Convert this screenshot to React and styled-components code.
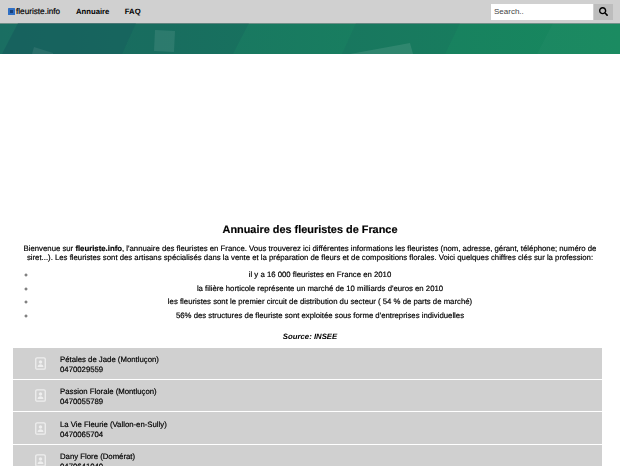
import styled, { createGlobalStyle } from "styled-components";
import { FaSearch } from "react-icons/fa";

const shops = [
    { name: "Pétales de Jade (Montluçon)", phone: "0470029559" },
    { name: "Passion Florale (Montluçon)", phone: "0470055789" },
    { name: "La Vie Fleurie (Vallon-en-Sully)", phone: "0470065704" },
    { name: "Dany Flore (Domérat)", phone: "0470641040" }
];

const facts = [
    "il y a 16 000 fleuristes en France en 2010",
    "la filière horticole représente un marché de 10 milliards d'euros en 2010",
    "les fleuristes sont le premier circuit de distribution du secteur ( 54 % de parts de marché)",
    "56% des structures de fleuriste sont exploitée sous forme d'entreprises individuelles"
];

function App() {
    return (
        <Page>
            <GlobalStyle />
            <TopBar>
                <Brand>
                    <BrandIcon viewBox="0 0 7 7">
                        <rect width="7" height="7" rx="0.6" fill="#2f6fc4" />
                        <rect x="2" y="2" width="3" height="3" fill="#173f7a" />
                    </BrandIcon>
                    fleuriste.info
                </Brand>
                <NavLink>Annuaire</NavLink>
                <NavLink>FAQ</NavLink>
                <SearchBox>
                    <SearchInput placeholder="Search.." />
                    <SearchButton><FaSearch /></SearchButton>
                </SearchBox>
            </TopBar>
            <Banner>
                <BannerArt viewBox="0 0 620 31" preserveAspectRatio="none">
                    <polygon points="18,0 136,0 122,31 2,31" fill="#15505a" opacity="0.4" />
                    <polygon points="136,0 249,0 233,31 122,31" fill="#15505a" opacity="0.18" />
                    <polygon points="356,0 460,0 445,31 342,31" fill="#15505a" opacity="0.12" />
                    <polygon points="553,0 620,0 620,31 537,31" fill="#fff" opacity="0.02" />
                    <polygon points="155,7 175,8 174,29 154,28" fill="#fff" opacity="0.09" />
                    <polygon points="32,31 34,24 53,30 53,31" fill="#fff" opacity="0.08" />
                    <polygon points="350,31 410,20 413,31" fill="#fff" opacity="0.1" />
                </BannerArt>
            </Banner>
            <AdSlot />
            <Title>Annuaire des fleuristes de France</Title>
            <Intro>
                Bienvenue sur <b>fleuriste.info</b>, l'annuaire des fleuristes en France. Vous trouverez ici différentes informations les fleuristes (nom, adresse, gérant, téléphone; numéro de siret...). Les fleuristes sont des artisans spécialisés dans la vente et la préparation de fleurs et de compositions florales. Voici quelques chiffres clés sur la profession:
            </Intro>
            <Facts>
                {facts.map((fact) => <Fact key={fact}>{fact}</Fact>)}
            </Facts>
            <Source>Source: INSEE</Source>
            <ShopList>
                {shops.map((shop) => (
                    <ShopRow key={shop.phone}>
                        <ShopIcon viewBox="0 0 12 14">
                            <rect x="0.8" y="0.8" width="10.4" height="12.4" rx="1.4" fill="none" stroke="#eeeeee" strokeWidth="1.4" />
                            <circle cx="6" cy="5.4" r="1.9" fill="#eeeeee" />
                            <path d="M2.8 10.8c0-2 1.4-2.9 3.2-2.9s3.2.9 3.2 2.9z" fill="#eeeeee" />
                        </ShopIcon>
                        <ShopText>
                            <span>{shop.name}</span>
                            <span>{shop.phone}</span>
                        </ShopText>
                    </ShopRow>
                ))}
            </ShopList>
        </Page>
    );
}

const GlobalStyle = createGlobalStyle`
    html, body {
        margin: 0;
        height: 466px;
        overflow: hidden;
        background: #fff;
        color: #000;
        font-family: "Liberation Sans", Arial, sans-serif;
        font-size: 7.78px;
        text-rendering: geometricPrecision;
    }
`;

const Page = styled.div`
    filter: blur(0.35px);
    -webkit-text-stroke: 0.18px #000;
`;

const TopBar = styled.header`
    display: flex;
    align-items: center;
    height: 23px;
    padding: 0 7px 0 8px;
    background: #d0d0d0;
    box-sizing: border-box;
`;

const Brand = styled.a`
    display: flex;
    align-items: center;
    gap: 1px;
    width: 68px;
    font-size: 8.2px;
`;

const BrandIcon = styled.svg`
    width: 7px;
    height: 7px;
`;

const NavLink = styled.a`
    margin-right: 15.5px;
    font-size: 7.7px;
    font-weight: bold;
    -webkit-text-stroke: 0;
`;

const SearchBox = styled.div`
    display: flex;
    margin-left: auto;
    gap: 1px;
`;

const SearchInput = styled.input`
    width: 102px;
    height: 16px;
    padding: 0 3px;
    border: none;
    outline: none;
    box-sizing: border-box;
    background: #fff;
    font-family: inherit;
    font-size: 8px;
    -webkit-text-stroke: 0;

    &::placeholder {
        color: #444;
    }
`;

const SearchButton = styled.button`
    display: flex;
    align-items: center;
    justify-content: center;
    width: 19px;
    height: 16px;
    padding: 0;
    border: none;
    background: #bdbdbd;
    font-size: 9px;
    color: #000;
`;

const Banner = styled.div`
    height: 31px;
    background: linear-gradient(to right, #1a6e62, #17895e);
    box-shadow: inset 0 1px 0 #6f8f88;
`;

const BannerArt = styled.svg`
    display: block;
    width: 100%;
    height: 100%;
`;

const AdSlot = styled.div`
    height: 170px;
`;

const Title = styled.h2`
    margin: 0 0 7px;
    font-size: 10.9px;
    line-height: 13px;
    font-weight: bold;
    text-align: center;
`;

const Intro = styled.p`
    margin: 0 13px 6px;
    line-height: 9px;
    text-align: center;
`;

const Facts = styled.ul`
    margin: 0 16px 8px 0;
    padding: 0 0 0 36px;
    list-style: circle;
`;

const Fact = styled.li`
    line-height: 13.7px;
    text-align: center;
    &::marker {
        color: #555;
    }
`;

const Source = styled.p`
    margin: 0 0 5px;
    line-height: 12px;
    font-style: italic;
    font-weight: bold;
    -webkit-text-stroke: 0;
    text-align: center;
`;

const ShopList = styled.div`
    display: flex;
    flex-direction: column;
    gap: 1px;
    margin: 0 18px 0 13px;
`;

const ShopRow = styled.div`
    display: flex;
    align-items: center;
    height: 31.3px;
    background: #d0d0d0;
`;

const ShopIcon = styled.svg`
    width: 11px;
    height: 13px;
    margin: 0 14px 0 22px;
`;

const ShopText = styled.div`
    display: flex;
    flex-direction: column;
    padding-top: 3px;
    line-height: 10px;
`;

export default App;
